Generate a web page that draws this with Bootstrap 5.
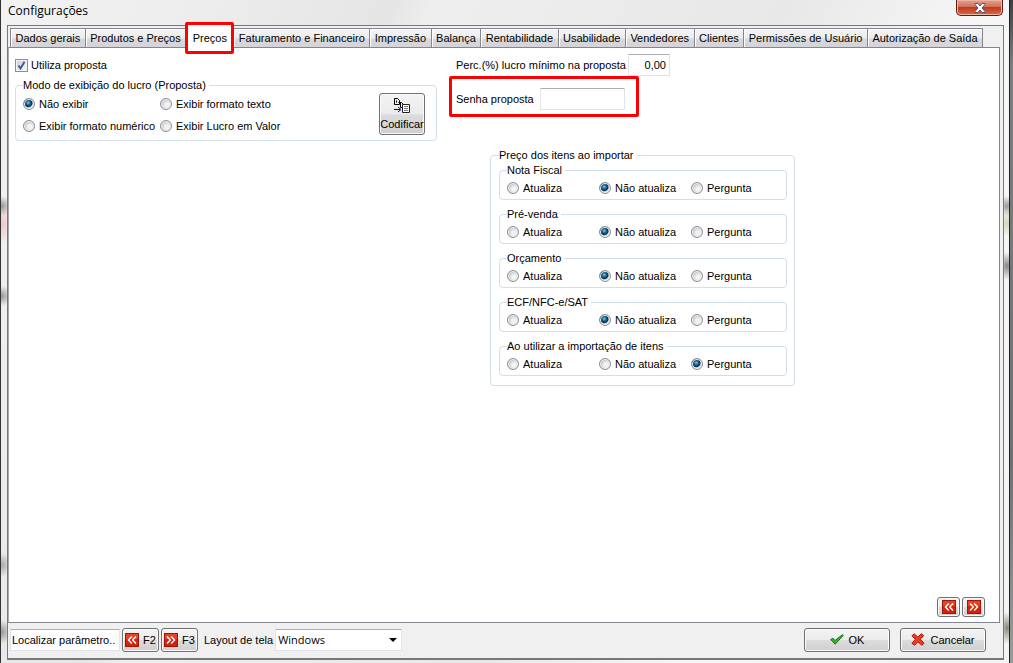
<!DOCTYPE html>
<html lang="pt-BR">
<head>
<meta charset="utf-8">
<meta name="viewport" content="width=device-width, initial-scale=1">
<title>Configurações</title>
<link href="https://cdn.jsdelivr.net/npm/bootstrap@5.3.0/dist/css/bootstrap.min.css" rel="stylesheet">
<style>
body{font:11px/14px "Liberation Sans",Arial,sans-serif;color:#000;background:linear-gradient(#3c3f3f,#7c8080 10%,#6e7272 70%,#9a9c9c);padding-right:3px}
.glass{border-left:1px solid #333;border-right:1px solid #222;padding:0 6px 3px;
 background:
  radial-gradient(ellipse 9px 10px at 1px 206px,#999,transparent),
  radial-gradient(ellipse 9px 20px at 1px 224px,#f3c4c4,transparent),
  radial-gradient(ellipse 9px 10px at 1px 296px,#999,transparent),
  radial-gradient(ellipse 9px 12px at 1px 565px,#aaa,transparent),
  radial-gradient(ellipse 9px 12px at 1px 632px,#999,transparent),
  radial-gradient(ellipse 9px 10px at calc(100% - 2px) 206px,#999,transparent),
  radial-gradient(ellipse 9px 14px at calc(100% - 2px) 223px,#d4d4bc,transparent),
  radial-gradient(ellipse 9px 14px at calc(100% - 2px) 266px,#888,transparent),
  radial-gradient(ellipse 9px 16px at calc(100% - 2px) 628px,#8a8a78,transparent),
  linear-gradient(115deg,#f2f2f2 0,#ededed 15%,#e5e5e5 30%,#eee 33%,#e8e8e8 60%,#f6f6f6 75%,#f4f4f4)}
.caption-bar{height:25px}
.caption-bar h1{font:12px/22px "Open Sans","Segoe UI",sans-serif;padding-left:1px}
.close-x{width:47px;height:16px;border:1px solid #5a1c14;border-top:0;border-radius:0 0 5px 5px;background:linear-gradient(#e2a192,#d4705a 45%,#c03c1c 50%,#d9694a);box-shadow:inset 0 0 0 1px #eab5a5}
.client{border:1px solid #77777c;border-bottom-width:2px;background:#f0f0f0;padding-right:3px;margin-right:-1px}
.tabs{padding:2px 0 0 2px;height:21px;margin-right:18px}
.tabs .tab{height:19px;border:1px solid #85858f;border-bottom:0;background:linear-gradient(#f4f4f4,#ececec 50%,#d9d9dc 55%,#d4d4d8);box-shadow:inset 1px 1px #fff;padding:0 4px;color:#000;line-height:19px;white-space:nowrap;margin-right:-1px;flex:1 1 auto}
.tabs .tab.active{background:#fff;height:32px;margin:-6px -1px 0 0;border:3px solid #f00;border-radius:2px;padding:0 4px;line-height:22px;position:relative;z-index:2}
.pane{border:1px solid #85858f;border-left-color:#aaa;background:#fff;margin-bottom:1px}
fieldset{border:1px solid #d2dee8;border-radius:4px;padding:0 7px}
legend{font-size:11px;line-height:12px;width:auto;float:none;margin:0;padding:0 3px 0 0}
.choice{display:flex;align-items:center;height:22px;gap:4px;white-space:nowrap}
.choice input{appearance:none;flex:none;width:12px;height:12px;margin:0;border:1px solid #8a8f94;border-radius:50%;background:radial-gradient(circle at 60% 60%,#f2f2f2 25%,#c6cacd 60%);box-shadow:inset 0 0 0 1px #f4f4f4}
.choice input[type=radio]:checked{background:radial-gradient(circle at 42% 38%,#7fd0ef 0,#1e6f9e 22%,#0b2c4c 45%,#d5dce0 58%)}
.choice input[type=checkbox]{width:13px;height:13px;border-radius:0}
.choice input[type=checkbox]:checked{background:url("data:image/svg+xml,%3Csvg xmlns='http://www.w3.org/2000/svg' viewBox='0 0 11 11'%3E%3Cpath d='M2.5 5.5 4.5 8.5 8.5 1.8' fill='none' stroke='%23405a9c' stroke-width='2'/%3E%3C/svg%3E"),linear-gradient(135deg,#ccd0d4,#f8f8f8)}
.modes{display:grid;grid-template-columns:137px 1fr;padding:2px 0 3px}
.targets{display:grid;grid-template-columns:repeat(3,92px);padding:1px 0 0}
.left-col{width:422px;margin:6px 12px 0 6px}
.use-row{gap:3px;margin-bottom:3px}
.field{border:1px solid #e2e3ea;border-top-color:#abadb3;border-radius:1px;height:22px;background:#fff;padding:0 3px;color:#000;outline:0}
.perc-row{padding:6px 0 0 7px;gap:2px}
.w-perc{width:42px}
.w-pass{width:85px}
.w-find{width:110px;padding:0 1px}
.w-skin{width:127px}
.callout-box{border:3px solid #f00;border-radius:2px;width:190px;height:41px;padding:4px 0 0 4px;gap:6px}
.import-box{width:305px;margin:32px 0 0 41px;padding:3px 7px 9px 8px}
.import-box fieldset+fieldset{margin-top:8px}
.key{border:1px solid #707070;border-radius:3px;background:linear-gradient(#f3f3f3,#ebebeb 50%,#dcdcdc 52%,#cfcfcf);box-shadow:inset 0 0 0 1px #fafafa;padding:0;color:#000;display:flex;align-items:center;justify-content:center;white-space:nowrap;overflow:hidden}
.key-code{width:46px;height:42px;flex-direction:column;margin:2px 4px 0 0;gap:3px}
.key-nav{width:23px;height:20px}
.nav-pair{gap:2px;padding:0 14px 5px 0}
.key-fn{width:37px;height:24px;gap:4px}
.key-cmd{width:86px;height:24px;gap:5px}
.foot{height:34px;padding:0 14px 3px 2px;gap:2px}
select.field{appearance:none;font:11px/18px "Open Sans",Tahoma,sans-serif;padding:0 2px;background:#fff url("data:image/svg+xml,%3Csvg xmlns='http://www.w3.org/2000/svg' viewBox='0 0 8 4'%3E%3Cpath d='M0 0h8L4 4z'/%3E%3C/svg%3E") no-repeat right 4px center/8px 4px}
</style>
</head>
<body>
<svg class="d-none">
 <symbol id="prev" viewBox="0 0 14 14"><rect x=".5" y=".5" width="13" height="13" fill="#dc2008" stroke="#9c1808"/><path d="M1 1h12v5H1z" fill="#f0583c" opacity=".6"/><path d="M6.8 3.5 3.5 7l3.3 3.5M11 3.5 7.7 7l3.3 3.5" fill="none" stroke="#fff" stroke-width="1.5"/></symbol>
 <symbol id="next" viewBox="0 0 14 14"><rect x=".5" y=".5" width="13" height="13" fill="#dc2008" stroke="#9c1808"/><path d="M1 1h12v5H1z" fill="#f0583c" opacity=".6"/><path d="M3 3.5 6.3 7 3 10.5M7.2 3.5 10.5 7l-3.3 3.5" fill="none" stroke="#fff" stroke-width="1.5"/></symbol>
</svg>
<div class="glass d-flex flex-column min-vh-100">
 <header class="caption-bar d-flex justify-content-between align-items-start">
  <h1 class="m-0">Configurações</h1>
  <button class="close-x p-0 d-flex align-items-center justify-content-center" aria-label="Fechar"><svg width="12" height="10" viewBox="0 0 12 10"><path d="M1 .5h3L6 3 8 .5h3v1L8 5l3 3.500v1H8L6 7 4 9.500H1v-1L4 5 1 1.500z" fill="#fff" stroke="#4b5266"/></svg></button>
 </header>
 <main class="client d-flex flex-column flex-grow-1">
  <nav class="tabs d-flex">
   <button class="tab">Dados gerais</button>
   <button class="tab">Produtos e Preços</button>
   <button class="tab active">Preços</button>
   <button class="tab">Faturamento e Financeiro</button>
   <button class="tab">Impressão</button>
   <button class="tab">Balança</button>
   <button class="tab">Rentabilidade</button>
   <button class="tab">Usabilidade</button>
   <button class="tab">Vendedores</button>
   <button class="tab">Clientes</button>
   <button class="tab">Permissões de Usuário</button>
   <button class="tab">Autorização de Saída</button>
  </nav>
  <section class="pane d-flex flex-column flex-grow-1">
   <div class="d-flex">
    <div class="left-col">
     <label class="choice use-row"><input type="checkbox" checked>Utiliza proposta</label>
     <fieldset>
      <legend>Modo de exibição do lucro (Proposta)</legend>
      <div class="d-flex align-items-start">
       <div class="modes flex-grow-1">
        <label class="choice"><input type="radio" name="modo" checked>Não exibir</label>
        <label class="choice"><input type="radio" name="modo">Exibir formato texto</label>
        <label class="choice"><input type="radio" name="modo">Exibir formato numérico</label>
        <label class="choice"><input type="radio" name="modo">Exibir Lucro em Valor</label>
       </div>
       <button class="key key-code">
        <svg width="17" height="16" viewBox="0 0 17 16" fill="none" stroke="#000"><path d="M.5.5h3l2 2v4h-5zM2.500 2.500v2M4.500 4.500h3l2 2v3h-3v-5" /><path d="M8.500 6.500h7v8h-7z" fill="#fff" stroke="#222"/><path d="M10 8.500h4M10 10.500h4M10 12.500h4" stroke="#777"/><path d="M0 11.500h6M4 9l3 2.500L4 14" stroke="#0000c0"/></svg>
        <span>Codificar</span>
       </button>
      </div>
     </fieldset>
    </div>
    <div>
     <div class="perc-row d-flex align-items-center"><label for="perc">Perc.(%) lucro mínimo na proposta</label><input class="field w-perc text-end" id="perc" value="0,00"></div>
     <div class="callout-box d-flex align-items-center"><label for="senha">Senha proposta</label><input class="field w-pass" id="senha" type="password"></div>
     <fieldset class="import-box">
      <legend>Preço dos itens ao importar</legend>
      <fieldset><legend>Nota Fiscal</legend><div class="targets">
       <label class="choice"><input type="radio" name="nf">Atualiza</label>
       <label class="choice"><input type="radio" name="nf" checked>Não atualiza</label>
       <label class="choice"><input type="radio" name="nf">Pergunta</label></div></fieldset>
      <fieldset><legend>Pré-venda</legend><div class="targets">
       <label class="choice"><input type="radio" name="pv">Atualiza</label>
       <label class="choice"><input type="radio" name="pv" checked>Não atualiza</label>
       <label class="choice"><input type="radio" name="pv">Pergunta</label></div></fieldset>
      <fieldset><legend>Orçamento</legend><div class="targets">
       <label class="choice"><input type="radio" name="orc">Atualiza</label>
       <label class="choice"><input type="radio" name="orc" checked>Não atualiza</label>
       <label class="choice"><input type="radio" name="orc">Pergunta</label></div></fieldset>
      <fieldset><legend>ECF/NFC-e/SAT</legend><div class="targets">
       <label class="choice"><input type="radio" name="ecf">Atualiza</label>
       <label class="choice"><input type="radio" name="ecf" checked>Não atualiza</label>
       <label class="choice"><input type="radio" name="ecf">Pergunta</label></div></fieldset>
      <fieldset><legend>Ao utilizar a importação de itens</legend><div class="targets">
       <label class="choice"><input type="radio" name="imp">Atualiza</label>
       <label class="choice"><input type="radio" name="imp">Não atualiza</label>
       <label class="choice"><input type="radio" name="imp" checked>Pergunta</label></div></fieldset>
     </fieldset>
    </div>
   </div>
   <div class="nav-pair d-flex justify-content-end mt-auto">
    <button class="key key-nav" aria-label="Anterior"><svg width="14" height="14"><use href="#prev"/></svg></button>
    <button class="key key-nav" aria-label="Próximo"><svg width="14" height="14"><use href="#next"/></svg></button>
   </div>
  </section>
  <footer class="foot d-flex align-items-center">
   <input class="field w-find" aria-label="Localizar parâmetro" value="Localizar parâmetro..">
   <button class="key key-fn"><svg width="14" height="14"><use href="#prev"/></svg>F2</button>
   <button class="key key-fn"><svg width="14" height="14"><use href="#next"/></svg>F3</button>
   <label class="ms-1" for="skin">Layout de tela</label>
   <select class="field w-skin" id="skin"><option>Windows</option></select>
   <button class="key key-cmd ms-auto"><svg width="14" height="11" viewBox="0 0 14 11"><path d="M.7 5.500 3 4.300l2 2.200L12.500.7l.8.6L5.200 10.200z" fill="#35b52a" stroke="#1c6e18"/></svg>OK</button>
   <button class="key key-cmd ms-2"><svg width="14" height="13" viewBox="0 0 14 13"><path d="M3 .7 6.800 4 10.500.7l2.200 2L9.300 6.300l3.800 4-2.200 2L6.900 8.800 3.500 12.300l-2.600-2 3.500-4L1 2.900z" fill="#f23a1e" stroke="#a81808"/></svg>Cancelar</button>
  </footer>
 </main>
</div>
<script src="https://cdn.jsdelivr.net/npm/bootstrap@5.3.0/dist/js/bootstrap.bundle.min.js"></script>
</body>
</html>
